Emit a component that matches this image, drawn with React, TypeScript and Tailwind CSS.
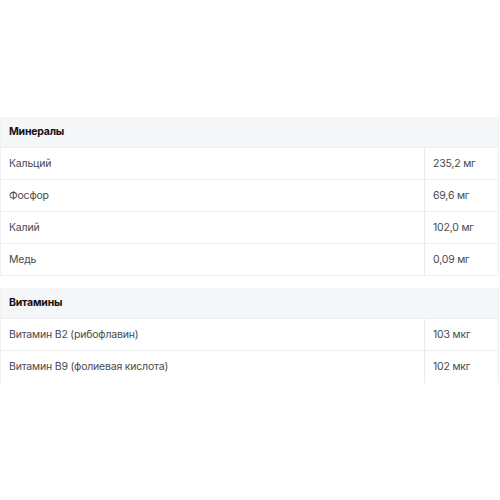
import React from "react";

type Row = [string, string];

function Section({ title, rows, last }: { title: string; rows: Row[]; last?: boolean }) {
  return (
    <div className="border-x border-[#f0f1f3]">
      <div className="h-[31px] bg-[#f5f6f8] flex items-center px-2 text-[10.5px] tracking-[-0.2px] font-bold text-[#111] border-b border-[#eceef0]">
        {title}
      </div>
      {rows.map(([name, val], i) => (
        <div
          key={i}
          className={`h-[32px] flex text-[10.5px] tracking-[-0.2px] text-[#4a4a4a] ${i === rows.length - 1 && last ? "" : "border-b border-[#eceef0]"}`}
        >
          <div className="flex-1 flex items-center px-2">{name}</div>
          <div className="w-[74px] border-l border-[#e8eaec] flex items-center px-2">{val}</div>
        </div>
      ))}
    </div>
  );
}

export default function App() {
  return (
    <div
      className="w-[500px] h-[500px] bg-white pt-[117px] pr-[1px]"
      style={{ fontFamily: "Inter, 'Noto Sans', sans-serif" }}
    >
      <Section
        title="Минералы"
        rows={[
          ["Кальций", "235,2 мг"],
          ["Фосфор", "69,6 мг"],
          ["Калий", "102,0 мг"],
          ["Медь", "0,09 мг"],
        ]}
      />
      <div className="h-[12px]" />
      <Section
        title="Витамины"
        last
        rows={[
          ["Витамин B2 (рибофлавин)", "103 мкг"],
          ["Витамин B9 (фолиевая кислота)", "102 мкг"],
        ]}
      />
    </div>
  );
}
